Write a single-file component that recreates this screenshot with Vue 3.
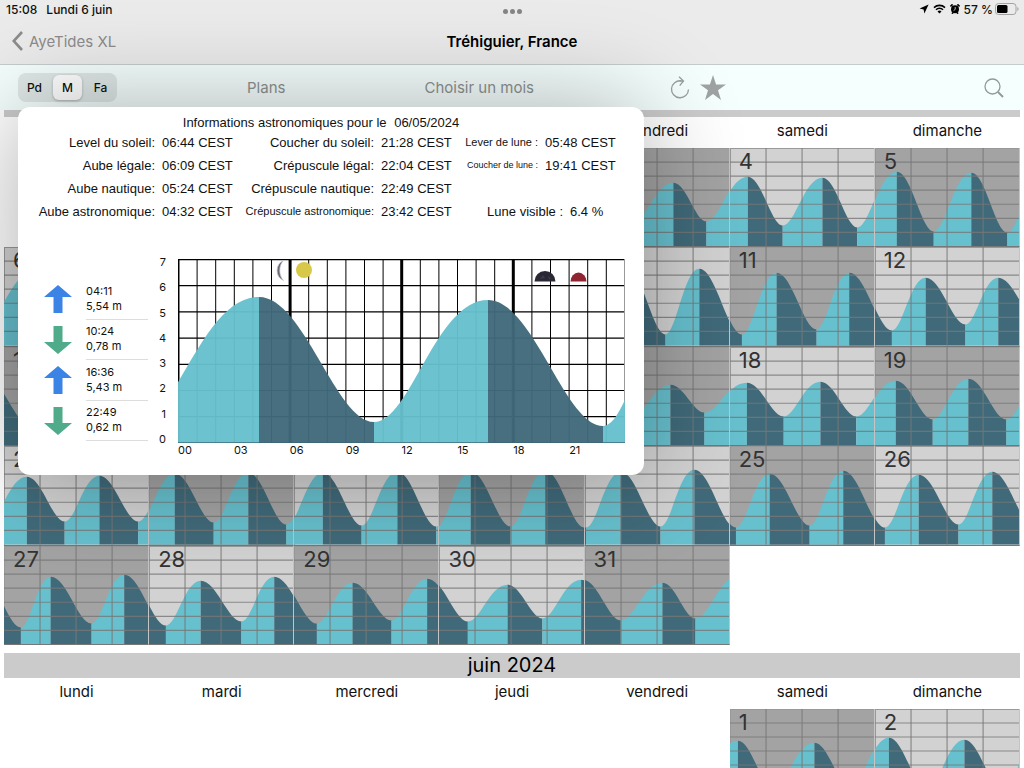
<script setup>
import { ref } from 'vue'

const weekdays = ['lundi', 'mardi', 'mercredi', 'jeudi', 'vendredi', 'samedi', 'dimanche']
const segments = ['Pd', 'M', 'Fa']
const segment = ref('M')

// Smooth curve through alternating extremes; crests are broader than troughs.
function areas(points, base) {
  const out = []
  for (let i = 0; i < points.length - 1; i++) {
    const [x0, y0] = points[i]
    const [x1, y1] = points[i + 1]
    const w = x1 - x0
    const rising = y1 < y0
    const a = rising ? 0.32 : 0.39
    const b = rising ? 0.46 : 0.33
    out.push({
      rising,
      d: `M${x0} ${base}V${y0}C${x0 + w * a} ${y0} ${x1 - w * b} ${y1} ${x1} ${y1}V${base}Z`
    })
  }
  return out
}

const cellW = 145
const cellH = 99

// `covered` lists the columns whose label lies under the open popover.
function week(first, startCol, endCol, points, covered = []) {
  const days = []
  for (let c = startCol; c <= endCol; c++) {
    days.push({ n: first + c - startCol, col: c, labelled: !covered.includes(c) })
  }
  return { days, areas: areas(points, cellH) }
}

const under = [1, 2, 3, 4]

const may = [
  week(1, 2, 6, [
    [248, 70], [290, 45], [330, 69], [366, 42], [405, 70], [441, 39], [480, 72], [515, 38], [553, 72],
    [590, 36], [629, 74], [669, 35], [702, 74], [743, 29], [778, 78], [818, 30], [853, 80],
    [892, 24], [929, 84], [967, 25], [1003, 85], [1041, 22]
  ], under),
  week(6, 0, 6, [
    [-26, 86], [34, 22], [72, 86], [108, 22], [147, 87], [182, 21], [221, 87], [256, 20], [296, 88],
    [330, 20], [370, 88], [404, 20], [444, 88], [478, 20], [518, 88], [552, 20], [590, 88],
    [622, 21], [661, 88], [695, 22], [737, 88], [772, 26], [812, 83], [845, 26], [887, 84],
    [921, 31], [961, 78], [994, 31], [1036, 78]
  ], under),
  week(13, 0, 6, [
    [-20, 30], [28, 81], [66, 34], [105, 80], [142, 36], [180, 78], [218, 38], [256, 76],
    [294, 40], [332, 74], [370, 41], [406, 72], [444, 42], [482, 70], [519, 42], [556, 68],
    [592, 40], [629, 68], [666, 38], [700, 66], [742, 36], [779, 70], [816, 35], [852, 70],
    [891, 34], [928, 73], [964, 32], [1002, 73], [1041, 29]
  ], under),
  week(20, 0, 6, [
    [-16, 76], [23, 31], [61, 76], [96, 30], [135, 76], [171, 28], [210, 77], [245, 27],
    [283, 79], [319, 27], [358, 80], [394, 26], [433, 81], [467, 26], [507, 81], [542, 25],
    [581, 82], [616, 26], [656, 81], [690, 24], [731, 82], [765, 28], [805, 80], [839, 25],
    [880, 82], [914, 29], [954, 79], [988, 26], [1030, 82]
  ], under),
  week(27, 0, 4, [
    [-24, 28], [17, 82], [47, 31], [88, 78], [121, 29], [162, 80], [197, 35], [238, 76],
    [271, 31], [313, 78], [349, 37], [388, 75], [424, 33], [464, 76], [504, 39], [539, 73],
    [578, 34], [616, 75], [658, 37], [691, 73], [735, 30]
  ])
]

const june = [
  week(1, 5, 6, [
    [692, 76], [733, 32], [768, 80], [810, 34], [846, 80], [884, 29], [922, 82], [960, 31],
    [998, 82], [1038, 26]
  ])
]

const months = [
  { title: '', label: 'mai 2024', weeks: may },
  { title: 'juin 2024', label: 'juin 2024', weeks: june }
]

const astro = [
  [['Level du soleil:', '06:44 CEST'], ['Coucher du soleil:', '21:28 CEST'], ['Lever de lune :', '05:48 CEST', 'mid']],
  [['Aube légale:', '06:09 CEST'], ['Crépuscule légal:', '22:04 CEST'], ['Coucher de lune :', '19:41 CEST', 'tiny']],
  [['Aube nautique:', '05:24 CEST'], ['Crépuscule nautique:', '22:49 CEST'], null],
  [['Aube astronomique:', '04:32 CEST'], ['Crépuscule astronomique:', '23:42 CEST', 'mid'], ['Lune visible :', '6.4 %', 'late']]
]

const tides = [
  { up: true, time: '04:11', height: '5,54 m' },
  { up: false, time: '10:24', height: '0,78 m' },
  { up: true, time: '16:36', height: '5,43 m' },
  { up: false, time: '22:49', height: '0,62 m' }
]

const dayAreas = areas([[-43, 166], [81, 38], [196, 163], [310, 41], [425, 167], [508, 41]], 184)
const hours = Array.from({ length: 24 }, (_, i) => i)
const hourLabels = ['00', '03', '06', '09', '12', '15', '18', '21']
</script>

<template>
  <div class="app">
    <header class="top">
      <div class="status">
        <span>15:08</span>
        <span>Lundi 6 juin</span>
        <div class="indicators">
          <svg width="10" height="10" viewBox="0 0 10 10"><path d="M9.6 .4 .6 4.5l4 .9 .8 4.1z" /></svg>
          <svg width="13" height="10" viewBox="0 0 13 10">
            <path d="M1 3.6a8 8 0 0 1 11 0M3 5.8a5 5 0 0 1 7 0" fill="none" stroke="#000" stroke-width="1.6" />
            <path d="M4.5 7.5a2.9 2.9 0 0 1 4 0l-2 2.1z" />
          </svg>
          <svg width="10" height="10" viewBox="0 0 10 10">
            <circle cx="5" cy="5.2" r="4" />
            <path d="M.4 2.4 2.6.3M9.6 2.4 7.4.3M2 9.7l1-1.3M8 9.7 7 8.4" stroke="#000" stroke-width="1.6" />
            <path d="M5.2 3v2.4L3.6 6.6" fill="none" stroke="#e9e9e9" stroke-width=".8" />
          </svg>
          <span>57 %</span>
          <svg width="24" height="12" viewBox="0 0 24 12">
            <rect x=".5" y=".5" width="20.500" height="11" rx="3" fill="none" stroke="#a3a3a3" />
            <rect x="2" y="2" width="10.500" height="8" rx="1.500" />
            <path d="M22.300 4a2.200 2.200 0 0 1 0 4z" fill="#a3a3a3" />
          </svg>
        </div>
      </div>
      <div class="dots"><i></i><i></i><i></i></div>
      <div class="nav">
        <a class="back" href="#">
          <svg width="11" height="20" viewBox="0 0 11 20"><path d="M10 1 1.700 10 10 19" fill="none" stroke="#8c8c8c" stroke-width="2.600" /></svg>
          AyeTides XL
        </a>
        <h1>Tréhiguier, France</h1>
      </div>
    </header>

    <div class="toolbar">
      <div class="segmented">
        <button v-for="s in segments" :key="s" type="button" :class="{ on: s === segment }" @click="segment = s">{{ s }}</button>
      </div>
      <button class="plain plans" type="button">Plans</button>
      <button class="plain choose" type="button">Choisir un mois</button>
      <button class="plain reload" type="button" aria-label="Actualiser">
        <svg width="20" height="24" viewBox="0 0 20 24" fill="none" stroke="#999f9f" stroke-width="1.300">
          <path d="M11 4.800a8.500 8.500 0 1 0 7.500 8.700" />
          <path d="M9.500 5h4M9 .800l4.500 4.200-3.800 4.600" />
        </svg>
      </button>
      <button class="plain star" type="button" aria-label="Favori">
        <svg width="26" height="25" viewBox="0 0 26 25"><path d="M13 0l3.100 9.400H26l-8 5.900 3 9.700-8-5.900-8 5.900 3-9.700-8-5.900h9.900z" fill="#9fa3a3" /></svg>
      </button>
      <button class="plain search" type="button" aria-label="Rechercher">
        <svg width="20" height="20" viewBox="0 0 20 20" fill="none" stroke="#949a9a">
          <circle cx="8.500" cy="8.500" r="7.500" stroke-width="1.300" />
          <path d="M14 14l5 5" stroke-width="2" />
        </svg>
      </button>
    </div>

    <main class="calendar">
      <section v-for="m in months" :key="m.label" class="month" :aria-label="m.label">
        <h2 :class="{ cut: !m.title }">{{ m.title }}</h2>
        <div class="weekdays"><span v-for="d in weekdays" :key="d">{{ d }}</span></div>
        <div class="weeks" :class="'rows-' + m.weeks.length">
          <template v-for="(w, wi) in m.weeks" :key="wi">
            <div
              v-for="day in w.days"
              :key="day.n"
              class="day"
              :class="{ dark: day.n % 2 }"
              :style="{ gridColumn: day.col + 1, gridRow: wi + 1 }"
            >
              <svg :viewBox="`${day.col * cellW} 0 ${cellW} ${cellH}`" preserveAspectRatio="none">
                <path v-for="(a, i) in w.areas" :key="i" :d="a.d" :class="a.rising ? 'rise' : 'fall'" />
                <g class="lines">
                  <path v-for="k in 6" :key="k" :d="`M${day.col * cellW} ${k * 14.15}h${cellW}`" />
                  <path v-for="k in 3" :key="'v' + k" :d="`M${day.col * cellW + k * 36.25} 0v${cellH}`" />
                </g>
              </svg>
              <span v-if="day.labelled" class="number">{{ day.n }}</span>
            </div>
          </template>
        </div>
      </section>
    </main>

    <section class="popover">
      <p class="title">Informations astronomiques pour le <time>06/05/2024</time></p>
      <div v-for="(row, r) in astro" :key="r" class="astro">
        <template v-for="(item, c) in row" :key="c">
          <template v-if="item">
            <span class="key" :class="item[2]">{{ item[0] }}</span>
            <span class="val">{{ item[1] }}</span>
          </template>
        </template>
      </div>

      <div class="detail">
        <ul class="tides">
          <li v-for="t in tides" :key="t.time">
            <svg width="28" height="28" viewBox="0 0 28 28">
              <path v-if="t.up" d="M14 0l14 12h-9.500v16h-9V12H0z" fill="#3c83e6" />
              <path v-else d="M14 28l14-12h-9.500V0h-9v16H0z" fill="#4fab89" />
            </svg>
            <div class="tide"><span>{{ t.time }}</span><span>{{ t.height }}</span></div>
          </li>
        </ul>
        <div class="scale"><span v-for="n in 8" :key="n">{{ 8 - n }}</span></div>
        <div class="chart">
          <svg viewBox="0 0 447 184">
            <path v-for="h in hours" :key="h" :d="`M${h * 18.6 + 0.5} 0V184`" stroke="#000" :stroke-width="h === 0 ? 2 : h % 6 === 0 ? 3 : 1" />
            <path v-for="k in 6" :key="'h' + k" :d="`M0 ${k * 26.2 + 0.5}H447`" stroke="#000" stroke-width="1.200" />
            <path d="M0 .500H447" stroke="#000" stroke-width="1.500" />
            <path d="M446.500 0V184" stroke="#999" />
            <g opacity=".96">
              <path v-for="(a, i) in dayAreas" :key="'a' + i" :d="a.d" :class="a.rising ? 'rise' : 'fall'" />
            </g>
            <path d="M0 183.500H447" stroke="#3b6675" opacity=".7" />
            <path d="M105.500 1.500a11 11 0 0 0 0 20c-5-5-5-15 0-20" fill="#6b6878" stroke="#c5c3cb" stroke-width=".7" />
            <circle cx="126" cy="11" r="8" fill="#d8c84a" />
            <path d="M356.500 22.500a10.500 10.500 0 0 1 21 0z" fill="#2a2835" />
            <path d="M362 20l3-4 2 3zM370 17l3 2-2 2z" fill="#3d3a49" />
            <path d="M392.500 22.500a8 9 0 0 1 16 0z" fill="#8f2433" />
          </svg>
          <div class="hours"><span v-for="h in hourLabels" :key="h">{{ h }}</span></div>
        </div>
      </div>
    </section>
  </div>
</template>

<style>
body {
  margin: 0;
  background: #fff;
}
</style>

<style scoped>
.app {
  position: relative;
  display: flex;
  flex-direction: column;
  height: 100vh;
  overflow: hidden;
  color: #111;
  font-family: Inter, "Liberation Sans", sans-serif;
}
button {
  padding: 0;
  border: 0;
  background: none;
  color: inherit;
  font: inherit;
}
svg {
  display: block;
}
.top {
  position: relative;
  box-sizing: border-box;
  height: 65px;
  border-bottom: 1px solid #c6cccd;
  background: #ebebeb;
}
.status {
  display: flex;
  align-items: center;
  gap: 9px;
  height: 18px;
  padding: 0 5px 0 6px;
  font-size: 12px;
  font-weight: 500;
}
.indicators {
  display: flex;
  align-items: center;
  gap: 4px;
  margin-left: auto;
}
.indicators span {
  margin-right: -2px;
}
.dots {
  position: absolute;
  top: 9px;
  left: 0;
  right: 0;
  display: flex;
  justify-content: center;
  gap: 2px;
}
.dots i {
  width: 5px;
  height: 5px;
  border-radius: 50%;
  background: #858585;
}
.nav {
  display: grid;
  grid-template-columns: 1fr auto 1fr;
  align-items: center;
  height: 46px;
}
.back {
  display: flex;
  align-items: center;
  gap: 6px;
  padding-left: 12px;
  color: #8c8c8c;
  font-size: 15px;
  text-decoration: none;
}
h1 {
  margin: 0;
  font-size: 15px;
  font-weight: 600;
  color: #000;
}
.toolbar {
  display: flex;
  align-items: center;
  height: 45px;
  padding: 0 20px 0 18px;
  background: #f5fffe;
}
.segmented {
  display: grid;
  grid-template-columns: repeat(3, 1fr);
  width: 99px;
  height: 29px;
  border-radius: 8px;
  background: #e0e8e8;
  font-size: 12px;
  font-weight: 500;
}
.segmented .on {
  margin: 2px;
  border-radius: 6px;
  background: #fff;
  box-shadow: 0 1px 3px rgba(0, 0, 0, 0.25);
}
.plain {
  color: #8d9393;
  font-size: 15px;
}
.plans {
  margin-left: 130px;
}
.choose {
  margin-left: 139px;
}
.reload {
  margin-left: 136px;
}
.star {
  margin-left: 10px;
}
.search {
  margin-left: auto;
}
.calendar {
  flex: 1;
  min-height: 0;
  padding: 0 4px;
  overflow: hidden;
}
.month {
  margin-bottom: 8px;
}
h2 {
  height: 25px;
  margin: 0;
  background: #cbcbcb;
  color: #000;
  font-size: 20px;
  font-weight: 400;
  line-height: 25px;
  text-align: center;
}
.cut {
  height: 7px;
}
.weekdays {
  display: grid;
  grid-template-columns: repeat(7, 1fr);
  height: 31px;
  line-height: 28px;
  font-size: 15px;
  text-align: center;
}
.weeks {
  display: grid;
  grid-template-columns: repeat(7, 1fr);
}
.rows-5 {
  grid-template-rows: repeat(5, 1fr);
  height: 497px;
}
.rows-1 {
  grid-template-rows: 99px;
}
.day {
  position: relative;
  min-width: 0;
  min-height: 0;
  box-sizing: border-box;
  border-right: 1px solid #c4c4c4;
  border-bottom: 1px solid #777;
  background: #d2d2d2;
  box-shadow: inset 1px 1px 0 #999;
}
.day.dark {
  background: #a3a3a3;
}
.day svg {
  width: 100%;
  height: 100%;
}
.rise {
  fill: #67c0ce;
}
.fall {
  fill: #406a7a;
}
.lines path {
  stroke: #777;
  stroke-opacity: 0.8;
  stroke-width: 1.2;
}
.number {
  position: absolute;
  top: 0;
  left: 9px;
  color: #333;
  font-size: 22px;
  line-height: 26px;
}
.popover {
  position: absolute;
  top: 107px;
  left: 18px;
  box-sizing: border-box;
  width: 626px;
  height: 368px;
  padding-top: 8px;
  border-radius: 12px;
  background: #fff;
  box-shadow: 0 0 100px rgba(0, 0, 0, 0.32);
}
.title,
.astro {
  font-family: "Liberation Sans", Arial, sans-serif;
  font-size: 13px;
}
.title {
  margin: 0 0 5px;
  padding-right: 20px;
  line-height: 15px;
  text-align: center;
}
.title time {
  padding-left: 4px;
}
.astro {
  display: grid;
  grid-template-columns: 137px 72px 147px 72px 92px 80px;
  height: 23px;
  line-height: 15px;
  white-space: nowrap;
}
.key {
  text-align: right;
}
.val {
  padding-left: 7px;
}
.mid {
  font-size: 11px;
}
.tiny {
  font-size: 9px;
}
.late {
  margin-right: -25px;
}
.late + .val {
  margin-left: 25px;
}
.detail {
  display: grid;
  grid-template-columns: 130px 30px 447px;
  margin-top: 32px;
}
.tides {
  display: grid;
  grid-template-rows: repeat(4, 1fr);
  height: 162px;
  margin: 20px 0 0;
  padding: 0 0 0 26px;
  list-style: none;
}
.tides li {
  display: grid;
  grid-template-columns: 28px 62px;
  column-gap: 14px;
  align-items: center;
}
.tide {
  display: flex;
  flex-direction: column;
  justify-content: center;
  box-sizing: border-box;
  height: 100%;
  border-bottom: 1px solid #ddd;
  font-size: 11px;
  line-height: 15px;
}
.scale {
  display: flex;
  flex-direction: column;
  justify-content: space-between;
  height: 191px;
  margin-top: -4px;
  padding-right: 12px;
  font-size: 11px;
  line-height: 14px;
  text-align: right;
}
.hours {
  display: grid;
  grid-template-columns: repeat(8, 1fr);
  font-size: 11px;
  line-height: 14px;
}
</style>
